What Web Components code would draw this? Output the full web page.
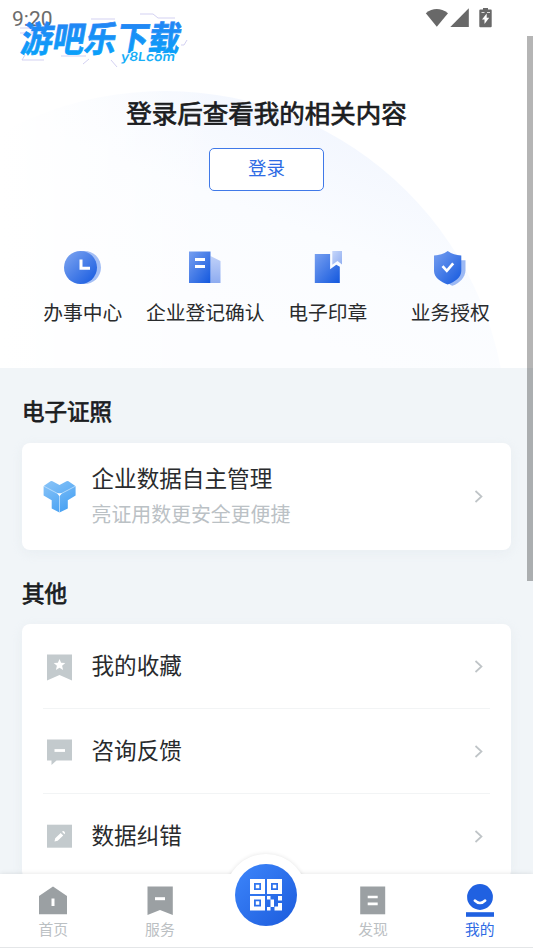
<!DOCTYPE html>
<html lang="zh-CN">
<head>
<meta charset="utf-8">
<title>我的</title>
<style>
html,body{margin:0;height:100%}
body{font-family:"Noto Sans CJK SC",sans-serif;color:#1b1d1f;overflow:hidden}
</style>
</head>
<body>
<my-page></my-page>
<script>
const ICONS = {
  clock: [38,36,`<defs><linearGradient id="g" x1="0" y1="0" x2="1" y2="1"><stop offset=".1" stop-color="#769fef"/><stop offset=".9" stop-color="#1e60e1"/></linearGradient></defs><circle cx="20.500" cy="17.5" r="16.5" fill="#a3bef5"/><circle cx="16.500" cy="17.5" r="16.5" fill="url(#g)"/><path d="M17 9.500v8.700h9" fill="none" stroke="#fff" stroke-width="3"/>`],
  building: [32,36,`<defs><linearGradient id="g" x1="0" y1="0" x2="1" y2="1"><stop offset="0" stop-color="#779ff0"/><stop offset="1" stop-color="#1358de"/></linearGradient><linearGradient id="h" x1="0" y1="0" x2="0" y2="1"><stop stop-color="#bfd0f8"/><stop offset="1" stop-color="#8eacf0"/></linearGradient></defs><path d="M21.5 6l10 5v22h-10z" fill="url(#h)"/><path d="M0 1.5h21.5V33H0z" fill="url(#g)"/><path d="M6 9.500h10M6 16.500h10" stroke="#fff" stroke-width="2.800"/>`],
  stamp: [28,36,`<defs><linearGradient id="g" x1="0" y1="0" x2="1" y2="1"><stop offset="0" stop-color="#779ff0"/><stop offset="1" stop-color="#1358de"/></linearGradient><linearGradient id="h" x1="0" y1="0" x2="1" y2="1"><stop stop-color="#c6d6fa"/><stop offset="1" stop-color="#91aff1"/></linearGradient></defs><g transform="translate(.8 0)"><path d="M0 4h15.300v15.300l6.200-4.600 3.500 2V33H0z" fill="url(#g)"/><path d="M17.500 1H27.200v13.500l-4.500-3.400-5.200 3.600z" fill="url(#h)"/></g>`],
  shield: [32,36,`<defs><linearGradient id="g" x1="0" y1="0" x2="1" y2="1"><stop offset="0" stop-color="#779ff0"/><stop offset="1" stop-color="#1358de"/></linearGradient></defs><path d="M6 10.300h25.500v10c0 7-6 13-13 15.500-4-1-8-6-9-9z" fill="#9cb9f4"/><path d="M13.700 1C18 4 22 5 27.300 5.500V21c0 6.300-6.600 11-13.600 13.500C6.700 32 0 27.300 0 21V5.500C5.500 5 9.500 4 13.700 1z" fill="url(#g)"/><path d="M8.500 16.200l4.300 4.600 6.400-7.400" fill="none" stroke="#fff" stroke-width="2.700"/>`],
  cube: [33,33,`<defs><linearGradient id="g" x1="0" y1="0" x2=".6" y2="1"><stop stop-color="#8bc5f8"/><stop offset="1" stop-color="#49a2f3"/></linearGradient></defs><path d="M1 5.700L7.500 1.200Q8.500.6 9.500 1.200L16.500 5 23.500 1.200Q24.500.6 25.500 1.200L32 5.700Q32.600 6.200 32.600 7v8.500l-7.800 4.700v8.200L17.500 32q-1 .6-2 0l-6.800-3.600v-8.200L.6 15.500V7Q.6 6.200 1 5.700z" fill="url(#g)"/><path d="M1 6.300l15.500 8.200L32.200 6.300M16.500 14.500v17.700" fill="none" stroke="#c4e2fd" stroke-width=".8"/><path d="M14 13.200h5l-2.500 3z" fill="#fff"/>`],
  star: [25,27,`<path d="M0 .5h25V26.500L12.500 21 0 26.500z" fill="#c3cacd"/><path d="M12.500 5l1.600 3.800 4.200.3-3.200 2.700 1 4.100-3.600-2.200-3.600 2.200 1-4.100-3.200-2.700 4.200-.3z" fill="#fff"/>`],
  chat: [25,27,`<path d="M0 .5h25v21H9.500L4.500 26v-4.500H0z" fill="#c3cacd"/><path d="M7.500 11.500h10.500" stroke="#fff" stroke-width="2.800"/>`],
  edit: [25,27,`<path d="M0 .7h25v23H0z" fill="#c3cacd"/><path d="M7.500 17.500l.7-3.200 5.500-5.200 2.500 2.500-5.500 5.200zM15 7.700a1.700 1.700 0 1 1 2.500 2.500z" fill="#fff"/>`],
  home: [28,30,`<path d="M14 1.500L28 11v18.300H0V11z" fill="#9ba0a3"/><path d="M14 13.500v7.500" stroke="#fff" stroke-width="3"/>`],
  service: [28,30,`<path d="M1.500 1.500h25.300V30L14 25 1.500 30z" fill="#9ba0a3"/><path d="M9 13.700h10" stroke="#fff" stroke-width="3"/>`],
  find: [28,30,`<path d="M1.200 1.500h25V29.300h-25z" fill="#9ba0a3"/><path d="M8.700 12h10M8.700 18.800h10" stroke="#fff" stroke-width="2.700"/>`],
  mine: [28,34,`<circle cx="14" cy="13" r="12.900" fill="#2061e1"/><path d="M8.800 16.500q5.200 5 10.400 0" fill="none" stroke="#fff" stroke-width="2.500" stroke-linecap="round"/><path d="M0 28.200h28v4.600H0z" fill="#2061e1"/>`],
  qr: [32,32,`<g fill="#fff" fill-rule="evenodd"><path d="M0 0h15v15H0zM4 4v7h7V4zM17 0h15v15H17zM21 4v7h7V4zM0 17h15v14.500H0zM4 20.500v7h7v-7z"/><path d="M5.800 5.800h3.500v3.500H5.800zM22.800 5.800h3.500v3.500h-3.500zM5.800 22.300h3.500v3.500H5.800zM17 17h3.500v3.500H17zM20.500 20.500H24V28h-3.500zM17 28h3.500v3.500H17zM28 17h4v4.500h-4zM24.500 27.500H28V24h4v7.500h-7.500z"/></g>`],
  chevron: [9,13,`<path d="M1.500 1l6 5.500L1.500 12" fill="none" stroke="#bfc4c7" stroke-width="1.700"/>`],
  wifi: [24,20,`<path d="M.8 5.200Q11.500-3.200 23 5.200L11.800 18.700z" fill="#686868"/>`],
  signal: [20,20,`<path d="M.3 19L18.800.2V19z" fill="#686868"/>`],
  battery: [13,20,`<path d="M4 0h5v1.500h3Q12.700 1.500 12.700 2.500v15.700q0 1-1 1H1.300q-1 0-1-1V2.500q0-1 1-1H4z" fill="#686868"/><path d="M2.500 4.500h3M8 4.500h3" stroke="#ddd"/><path d="M7.700 5.500v4.300h2.500L5.500 16v-4.500H3z" fill="#fff"/>`]
};
function define(name, html, setup){
  const t = document.createElement('template');
  t.innerHTML = html;
  customElements.define(name, class extends HTMLElement{
    constructor(){ super(); this.attachShadow({mode:'open'}).append(t.content.cloneNode(true)); }
    connectedCallback(){ if(setup) setup(this, this.shadowRoot); }
  });
}
define('ui-icon', `<style>:host{display:block;flex:none}svg{display:block}</style><span></span>`, (el,r)=>{
  const [w,h,body] = ICONS[el.getAttribute('name')];
  r.querySelector('span').innerHTML = `<svg width="${w}" height="${h}" viewBox="0 0 ${w} ${h}">${body}</svg>`;
});
define('status-bar', `<style>
:host{display:flex;height:28px;padding:0 41px 0 12px;align-items:flex-start;justify-content:space-between;font:21px/20px Roboto,sans-serif;color:#6c6c6c;box-sizing:border-box}
.time{padding-top:8.500px}.icons{display:flex;padding-top:7.500px}
ui-icon+ui-icon{margin-left:1px}ui-icon:last-child{margin-left:9px}
</style><span class="time">9:20</span><div class="icons"><ui-icon name="wifi"></ui-icon><ui-icon name="signal"></ui-icon><ui-icon name="battery"></ui-icon></div>`);
define('site-mark', `<style>
:host{position:absolute;left:16px;top:10px;width:176px;height:58px;display:block}
svg{display:block;overflow:visible}
</style><svg width="176" height="58" viewBox="0 0 176 58">
<defs><linearGradient id="m" x1="0" y1="0" x2="0" y2="1"><stop offset=".2" stop-color="#2484f4"/><stop offset=".9" stop-color="#08a2fa"/></linearGradient></defs>
<path d="M75 9h24M124 4h13l5 4h17M165 35h3l3-5M4 18h22M4 23h14M9 45l-3 5h22M73 49l-6 5M95 50l6 7M45 46h25" fill="none" stroke="#d3d1f2" stroke-width="1"/>
<g font-family="Noto Sans CJK SC" font-weight="700" fill="url(#m)" stroke="url(#m)" stroke-width=".7">
<text transform="translate(3.500 41.500) skewX(-10) scale(1 1.080)" font-size="33" textLength="159" lengthAdjust="spacingAndGlyphs">游吧乐下载</text></g>
<text transform="translate(104.500 51) skewX(-8)" font-family="Inter" font-weight="600" font-size="12.500" fill="#18aef7" stroke="#fff" stroke-width="2" paint-order="stroke" textLength="54" lengthAdjust="spacingAndGlyphs">y8Lcom</text>
</svg>`);
define('quick-link', `<style>
:host{display:flex;flex-direction:column;align-items:center;font-size:19.800px;line-height:28px;white-space:nowrap;color:#292b2d}
.i{height:36px;margin-top:1px;margin-bottom:12px}
</style><div class="i"></div><slot></slot>`, (el,r)=>{ r.querySelector('.i').innerHTML = `<ui-icon name="${el.getAttribute('icon')}"></ui-icon>`; });
define('login-hero', `<style>
:host{display:flex;flex-direction:column;align-items:center;height:340px;padding-top:65px;box-sizing:border-box}
h1{margin:0;font-size:25.500px;line-height:38px;font-weight:400;-webkit-text-stroke:.75px currentColor}
button{margin:16.500px 0 0;width:115px;height:43px;border:1.300px solid #4079e8;border-radius:5px;background:#fff;color:#2e6be4;font:18.500px/36px "Noto Sans CJK SC",sans-serif;padding:0 0 5px}
nav{display:grid;grid-template-columns:repeat(4,1fr);width:490px;margin-top:58px}
</style><h1>登录后查看我的相关内容</h1><button>登录</button><nav><slot></slot></nav>`);
define('section-title', `<style>:host{display:block;font-size:22.500px;line-height:34px;-webkit-text-stroke:.75px currentColor;padding:0 22px}</style><slot></slot>`);
define('card-box', `<style>:host{display:block;margin:0 22px;background:#fff;border-radius:8px;box-shadow:0 3px 12px #d8e0e655}</style><slot></slot>`);
define('list-row', `<style>
:host{display:flex;align-items:center;height:85px;margin:0 21px;box-sizing:border-box;border-bottom:1.500px solid #f2f4f5}
.icon{width:33px;display:flex;justify-content:center;margin-right:15.500px}
.copy{flex:1;font-size:22.600px;line-height:34px;padding-bottom:3px;color:#292b2d}
.sub{display:block;font-size:19.900px;line-height:30px;color:#bbc1c5;margin-top:4px}
.end{padding-right:7px}
:host(:not([large])) .icon{padding-top:2px}
:host([large]){height:107.500px;border:0}:host([large]) .copy{padding-bottom:3px}
:host([last]){border:0}
</style><div class="icon"></div><div class="copy"><slot></slot><span class="sub"><slot name="sub"></slot></span></div><div class="end"><ui-icon name="chevron"></ui-icon></div>`, (el,r)=>{
  r.querySelector('.icon').innerHTML = `<ui-icon name="${el.getAttribute('icon')}"></ui-icon>`;
  if(!el.hasAttribute('large')) r.querySelector('.sub').remove();
});
define('tab-item', `<style>
:host{display:flex;flex-direction:column;align-items:center;font-size:14.800px;line-height:20px;color:#bbc0c3}
.i{height:34px;margin-top:11px}
:host([active]) .i{margin-top:10px;height:35px}
:host([active]){color:#2e6be4}
</style><div class="i"></div><slot></slot>`, (el,r)=>{ r.querySelector('.i').innerHTML = `<ui-icon name="${el.getAttribute('icon')}"></ui-icon>`; });
define('tab-bar', `<style>
:host{display:block;position:absolute;left:0;right:0;bottom:0;height:74px}
.bump{position:absolute;left:225px;top:-20px;width:82px;height:82px;border-radius:50%;background:#fff;box-shadow:0 0 4px #0000001c}
.bar{position:relative;height:73px;background:#fff;display:grid;grid-template-columns:repeat(5,1fr);border-bottom:1px solid #e4e6e8}
.shade{position:absolute;inset:0;box-shadow:0 0 5px #0000001c}
.scan{justify-self:center;width:62px;height:62px;border-radius:50%;background:linear-gradient(135deg,#3d86fb,#1c5bdc);margin-top:-10px;display:grid;place-items:center}
</style><div class="shade"></div><div class="bump"></div><div class="bar"><tab-item icon="home">首页</tab-item><tab-item icon="service">服务</tab-item><div class="scan"><ui-icon name="qr"></ui-icon></div><tab-item icon="find">发现</tab-item><tab-item icon="mine" active>我的</tab-item></div>`);
define('my-page', `<style>
:host{display:block;position:relative;width:533px;height:948px;overflow:hidden;background:#f1f5f8}
header{height:368.400px;background:#fff;position:relative;overflow:hidden}
header>svg{position:absolute;left:0;top:0}
status-bar,login-hero{position:relative}
main{display:flex;flex-direction:column}
.a{margin-top:24.500px;margin-bottom:15.700px}.b{margin-top:24.600px;margin-bottom:15.500px}
.thumb{position:absolute;right:0;top:36px;width:6px;height:544.500px;background:rgba(0,0,0,.29)}
</style>
<header><svg width="533" height="369"><defs><linearGradient id="c" gradientUnits="userSpaceOnUse" x1="360" y1="120" x2="280" y2="330"><stop stop-color="#f2f6fe"/><stop offset=".55" stop-color="#fafcff"/><stop offset="1" stop-color="#fcfdff"/></linearGradient><linearGradient id="f" x1="0" x2="1"><stop stop-color="#fff"/><stop offset=".6" stop-color="#fff" stop-opacity="0"/></linearGradient></defs><circle cx="165" cy="433" r="342" fill="url(#c)"/><path d="M0 0h360v369H0z" fill="url(#f)"/></svg>
<status-bar></status-bar><login-hero><quick-link icon="clock">办事中心</quick-link><quick-link icon="building">企业登记确认</quick-link><quick-link icon="stamp">电子印章</quick-link><quick-link icon="shield">业务授权</quick-link></login-hero></header>
<main><section-title class="a">电子证照</section-title>
<card-box><list-row large icon="cube">企业数据自主管理<span slot="sub">亮证用数更安全更便捷</span></list-row></card-box>
<section-title class="b">其他</section-title>
<card-box><list-row icon="star">我的收藏</list-row><list-row icon="chat">咨询反馈</list-row><list-row icon="edit" last>数据纠错</list-row></card-box></main>
<tab-bar></tab-bar><div class="thumb"></div><site-mark></site-mark>`);
</script>
</body>
</html>
